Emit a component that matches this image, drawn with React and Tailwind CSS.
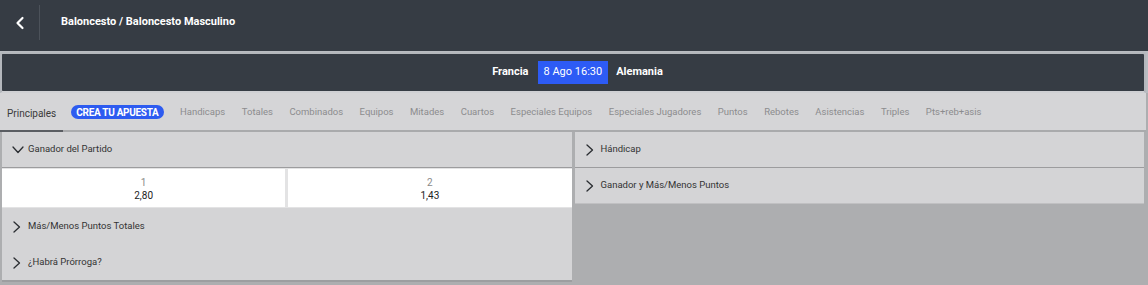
import React from 'react';

// Match page — header, event bar, market tabs and collapsible markets

const TABS = [
  'Handicaps', 'Totales', 'Combinados', 'Equipos', 'Mitades', 'Cuartos',
  'Especiales Equipos', 'Especiales Jugadores', 'Puntos', 'Rebotes',
  'Asistencias', 'Triples', 'Pts+reb+asis',
];

function Chevron({ dir = 'right' }) {
  const d = dir === 'down' ? 'M1 3 L6 8.5 L11 3' : 'M2 1 L7.5 6 L2 11';
  return (
    <svg width="12" height="12" viewBox="0 0 12 12" className="shrink-0">
      <path d={d} fill="none" stroke="#2a2d31" strokeWidth="1.3" strokeLinecap="round" strokeLinejoin="round" />
    </svg>
  );
}

function MarketRow({ label, open, className = '' }) {
  return (
    <div className={`flex items-center gap-[4px] pl-[10px] text-[9.5px] text-[#333] bg-[#d4d4d6] ${className}`}>
      <Chevron dir={open ? 'down' : 'right'} />
      <span>{label}</span>
    </div>
  );
}

function Odd({ label, value }) {
  return (
    <div className="flex-1 bg-white flex flex-col items-center justify-center leading-[13px] pt-px">
      <span className="text-[10px] text-[#8a8a8a]">{label}</span>
      <span className="text-[10px] text-[#222]">{value}</span>
    </div>
  );
}

export default function App() {
  return (
    <div className="w-[1148px] h-[285px] overflow-hidden bg-[#adaeb0] font-['Roboto',sans-serif]">
      {/* top header */}
      <div className="h-[51px] bg-[#363c44] flex items-center">
        <div className="w-[40px] h-[35px] flex items-center justify-center border-r border-[#4c525a] -mt-[6px]">
          <svg width="12" height="14" viewBox="0 0 12 14">
            <path d="M8.5 2 L3.5 7 L8.5 12" fill="none" stroke="#fff" strokeWidth="2.2" strokeLinecap="round" strokeLinejoin="round" />
          </svg>
        </div>
        <div className="pl-[21px] -mt-[7px] text-[11px] font-bold text-white">Baloncesto / Baloncesto Masculino</div>
      </div>

      {/* event bar */}
      <div className="bg-[#b9bcc1] pt-px">
        <div className="h-[41px] mr-[2px] pl-[9px] rounded-[3px] border-2 border-[#b4b7bc] border-b-[#cfd0d3] bg-[#363c44] flex items-center justify-center text-[11px] font-bold text-white">
          <span>Francia</span>
          <span className="ml-[9px] mr-[8px] bg-[#2d5bf5] h-[23px] px-[6px] flex items-center font-normal">8 Ago 16:30</span>
          <span>Alemania</span>
        </div>
      </div>

      {/* tabs */}
      <div className="h-[39px] bg-[#d5d5d7] mr-[2px] flex items-end border-b-2 border-[#a9aaac] text-[9.5px]">
        <div className="h-full flex items-center pt-px px-[7px] text-[10px] text-[#3a3a3a] border-b-2 border-[#5a5d62] -mb-[2px]">Principales</div>
        <div className="h-full flex items-center pt-px gap-[16.5px] pl-[8px] text-[#8c8c8e]">
          <span className="bg-[#2d5bf0] text-white font-bold rounded-full px-[5px] h-[14px] flex items-center text-[10px] tracking-[-0.3px]">CREA TU APUESTA</span>
          {TABS.map((t) => (
            <span key={t}>{t}</span>
          ))}
        </div>
      </div>

      {/* markets */}
      <div className="flex gap-[3px] pl-[2px] pr-[4px]">
        <div className="flex-1 flex flex-col border-b-2 border-[#9d9ea0]">
          <MarketRow label="Ganador del Partido" open className="h-[36px] border-b border-[#9c9c9e]" />
          <div className="h-[40px] flex gap-[3px] bg-[#e3e3e4] py-[1px]">
            <Odd label="1" value="2,80" />
            <Odd label="2" value="1,43" />
          </div>
          <MarketRow label="Más/Menos Puntos Totales" className="h-[37px]" />
          <MarketRow label="¿Habrá Prórroga?" className="h-[35px]" />
        </div>
        <div className="flex-1 flex flex-col self-start">
          <MarketRow label="Hándicap" className="h-[36px] border-b border-[#9c9c9e]" />
          <MarketRow label="Ganador y Más/Menos Puntos" className="h-[36px] border-b border-[#c0c0c2]" />
        </div>
      </div>
    </div>
  );
}
